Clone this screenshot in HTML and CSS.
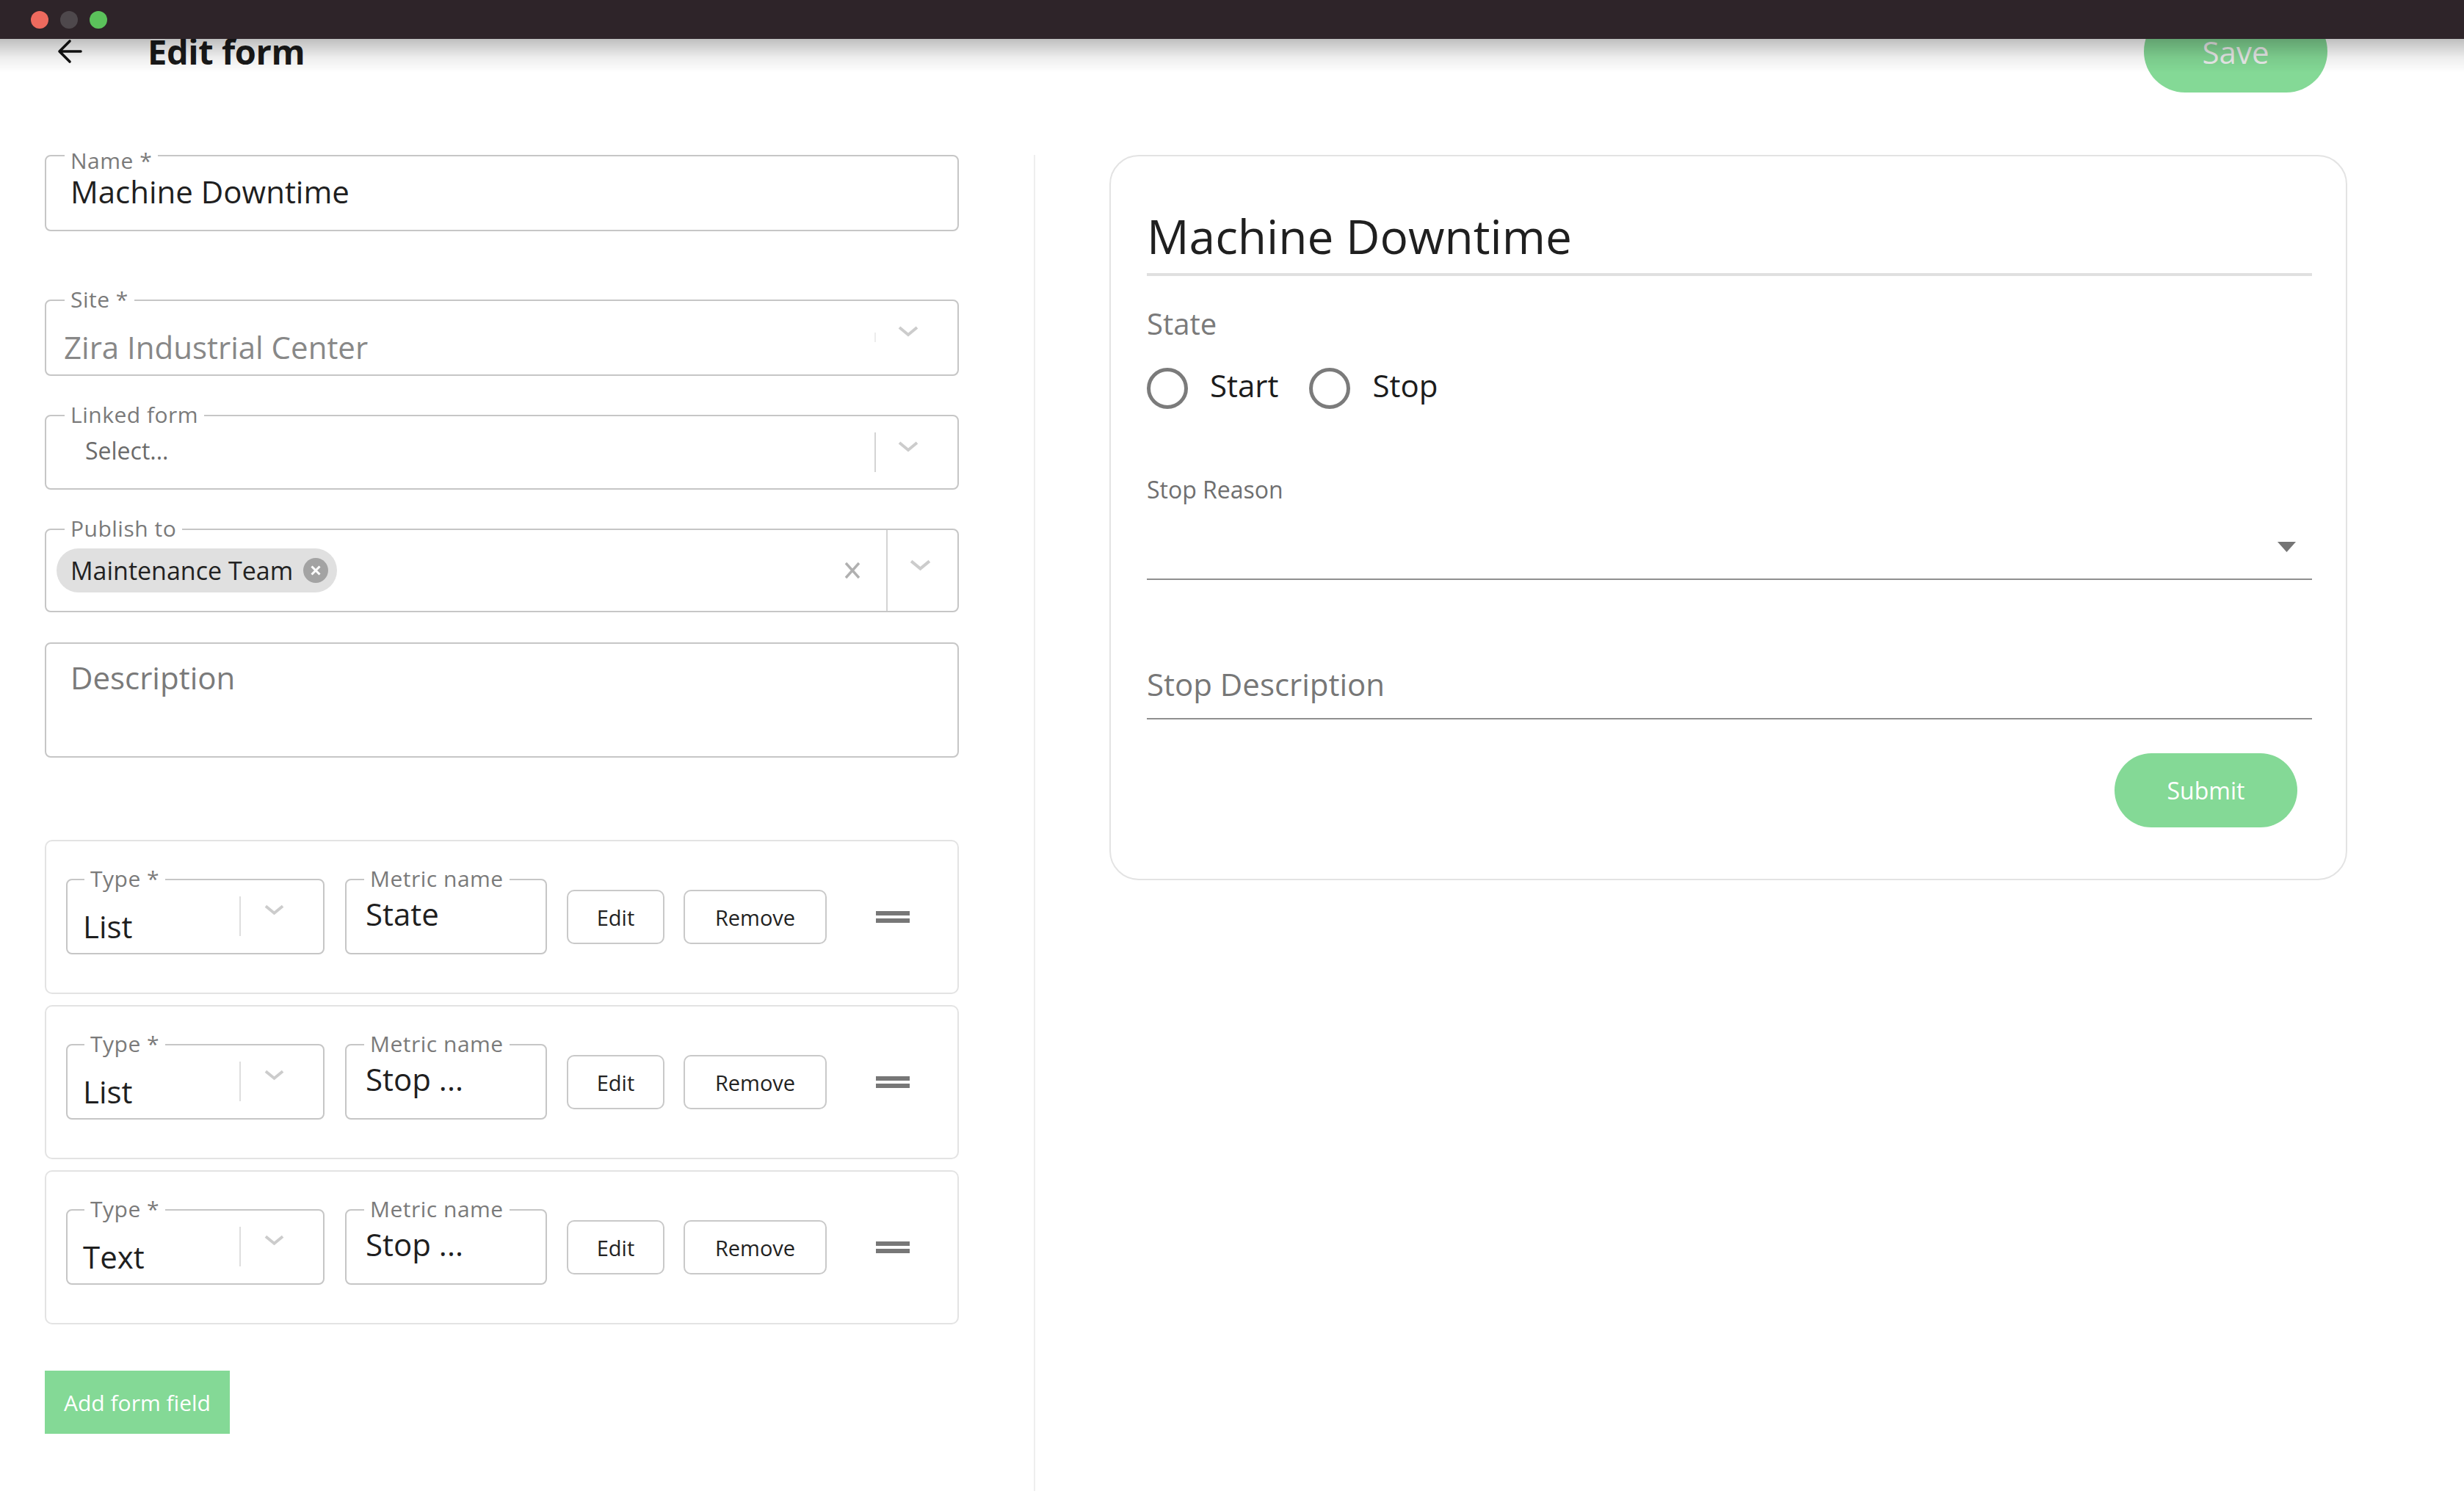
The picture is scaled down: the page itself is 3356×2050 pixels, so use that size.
FILE: index.html
```html
<!DOCTYPE html>
<html lang="en">
<head>
<meta charset="utf-8">
<title>Edit form</title>
<link rel="stylesheet" href="styles.css">
</head>
<body>
<div class="titlebar">
  <span class="light light-red"></span>
  <span class="light light-gray"></span>
  <span class="light light-green"></span>
</div>
<div class="titlebar-shadow"></div>

<div class="page">
  <header class="topbar">
    <button class="back" aria-label="Back">
      <svg viewBox="0 0 34 34" width="34" height="34"><path d="M32 17H4M17 3L3 17l14 14" fill="none" stroke="#141414" stroke-width="3.6" stroke-linecap="round" stroke-linejoin="round"/></svg>
    </button>
    <h1 class="title">Edit form</h1>
    <button class="save">Save</button>
  </header>

  <main class="main">
    <section class="editor">
      <div class="field field-name">
        <span class="flabel flabel-low">Name *</span>
        <div class="value">Machine Downtime</div>
      </div>

      <div class="field field-select field-site">
        <span class="flabel">Site *</span>
        <div class="value value-muted site-value">Zira Industrial Center</div>
        <span class="sep sep-short"></span>
        <svg class="chev" viewBox="0 0 30 16" width="30" height="16"><path d="M3 3l12 10 12-10" fill="none" stroke="#cccccc" stroke-width="4"/></svg>
      </div>

      <div class="field field-select field-linked">
        <span class="flabel">Linked form</span>
        <div class="placeholder">Select...</div>
        <span class="sep sep-mid"></span>
        <svg class="chev" viewBox="0 0 30 16" width="30" height="16"><path d="M3 3l12 10 12-10" fill="none" stroke="#cccccc" stroke-width="4"/></svg>
      </div>

      <div class="field field-publish">
        <span class="flabel">Publish to</span>
        <span class="chip">Maintenance Team
          <svg class="chip-x" viewBox="0 0 34 34" width="34" height="34"><circle cx="17" cy="17" r="17" fill="#a3a3a3"/><path d="M11.5 11.5l11 11M22.5 11.5l-11 11" stroke="#fff" stroke-width="3"/></svg>
        </span>
        <svg class="clear" viewBox="0 0 26 26" width="26" height="26"><path d="M4 3l18 20M22 3L4 23" stroke="#b0b0b0" stroke-width="3.4"/></svg>
        <span class="sep sep-full"></span>
        <svg class="chev chev-publish" viewBox="0 0 30 16" width="31" height="17"><path d="M3 3l12 10 12-10" fill="none" stroke="#cccccc" stroke-width="4"/></svg>
      </div>

      <div class="field field-desc">
        <div class="value value-muted">Description</div>
      </div>

      <div class="metric-list">
        <div class="metric-card">
          <div class="field field-type">
            <span class="flabel">Type *</span>
            <div class="value type-value">List</div>
            <span class="sep sep-type"></span>
            <svg class="chev chev-type" viewBox="0 0 30 16" width="29" height="16"><path d="M3 3l12 10 12-10" fill="none" stroke="#cccccc" stroke-width="4"/></svg>
          </div>
          <div class="field field-metric">
            <span class="flabel">Metric name</span>
            <div class="value">State</div>
          </div>
          <button class="btn btn-edit">Edit</button>
          <button class="btn btn-remove">Remove</button>
          <span class="handle"><span></span><span></span></span>
        </div>

        <div class="metric-card">
          <div class="field field-type">
            <span class="flabel">Type *</span>
            <div class="value type-value">List</div>
            <span class="sep sep-type"></span>
            <svg class="chev chev-type" viewBox="0 0 30 16" width="29" height="16"><path d="M3 3l12 10 12-10" fill="none" stroke="#cccccc" stroke-width="4"/></svg>
          </div>
          <div class="field field-metric">
            <span class="flabel">Metric name</span>
            <div class="value">Stop ...</div>
          </div>
          <button class="btn btn-edit">Edit</button>
          <button class="btn btn-remove">Remove</button>
          <span class="handle"><span></span><span></span></span>
        </div>

        <div class="metric-card">
          <div class="field field-type">
            <span class="flabel">Type *</span>
            <div class="value type-value">Text</div>
            <span class="sep sep-type"></span>
            <svg class="chev chev-type" viewBox="0 0 30 16" width="29" height="16"><path d="M3 3l12 10 12-10" fill="none" stroke="#cccccc" stroke-width="4"/></svg>
          </div>
          <div class="field field-metric">
            <span class="flabel">Metric name</span>
            <div class="value">Stop ...</div>
          </div>
          <button class="btn btn-edit">Edit</button>
          <button class="btn btn-remove">Remove</button>
          <span class="handle"><span></span><span></span></span>
        </div>
      </div>

      <button class="add-btn">Add form field</button>
    </section>

    <div class="divider"></div>

    <section class="preview">
      <h2 class="pv-title">Machine Downtime</h2>
      <div class="pv-label">State</div>
      <div class="radios">
        <span class="radio"></span><span class="radio-text">Start</span>
        <span class="radio radio-second"></span><span class="radio-text">Stop</span>
      </div>
      <div class="reason-label">Stop Reason</div>
      <div class="select-line">
        <svg class="drop" viewBox="0 0 29 14" width="29" height="14"><path d="M2 0h25L14.5 14z" fill="#757575"/></svg>
      </div>
      <div class="desc-input">Stop Description</div>
      <button class="submit">Submit</button>
    </section>
  </main>
</div>
</body>
</html>
```

FILE: styles.css
```css
* { box-sizing: border-box; }

html, body { margin: 0; padding: 0; background: #ffffff; }

body {
  font-family: "Open Sans", "Liberation Sans", sans-serif;
  color: #1f1f1f;
}

button { font-family: inherit; cursor: pointer; }

/* window chrome */
.titlebar {
  position: fixed;
  top: 0; left: 0; right: 0;
  height: 53px;
  background: #2e2429;
  display: flex;
  align-items: center;
  gap: 16px;
  padding-left: 42px;
  z-index: 10;
}
.light { width: 24px; height: 24px; border-radius: 50%; }
.light-red { background: #ed6a5e; }
.light-gray { background: #4e484c; }
.light-green { background: #5bc25b; }

.titlebar-shadow {
  position: fixed;
  top: 53px; left: 0; right: 0;
  height: 46px;
  background: linear-gradient(rgba(0,0,0,0.25), rgba(0,0,0,0.07) 55%, rgba(0,0,0,0));
  pointer-events: none;
  z-index: 9;
}

/* header */
.topbar {
  display: flex;
  align-items: center;
  height: 112px;
  margin-top: 14px;
  padding: 0 186px 0 78px;
}
.back {
  width: 34px; height: 34px;
  padding: 0; border: 0; background: none;
  display: flex;
}
.title {
  margin: 0 0 0 89px;
  font-size: 47px;
  font-weight: 700;
  line-height: 112px;
  color: #1a1a1a;
  letter-spacing: -0.4px;
}
.save {
  margin-left: auto;
  width: 250px;
  height: 112px;
  border: 0;
  border-radius: 56px;
  background: #84d996;
  color: #ececec;
  font-size: 42px;
}

/* layout */
.main {
  display: flex;
  margin-top: 85px;
  padding-left: 61px;
}
.editor {
  width: 1245px;
  padding-bottom: 78px;
  display: flex;
  flex-direction: column;
}
.divider {
  width: 2px;
  background: #eeeeee;
  margin-left: 102px;
}
.preview {
  width: 1686px;
  margin-left: 101px;
  align-self: flex-start;
  border: 2px solid #e3e3e3;
  border-radius: 40px;
  padding: 71px 46px 70px 49px;
  display: flex;
  flex-direction: column;
}

/* outlined fields */
.field {
  position: relative;
  border: 2px solid #c6c6c6;
  border-radius: 8px;
}
.flabel {
  position: absolute;
  top: -17px;
  left: 25px;
  padding: 0 8px;
  background: #fff;
  font-size: 30px;
  line-height: 30px;
  color: #7a7a7a;
  letter-spacing: 0.5px;
  white-space: nowrap;
}
.flabel-low { top: -9px; }

.value {
  font-size: 42px;
  line-height: 50px;
  color: #1f1f1f;
  white-space: nowrap;
}
.value-muted { color: #888888; }

.field-name {
  height: 104px;
  padding: 23px 0 0 33px;
}

.field-select {
  display: flex;
  align-items: flex-start;
}
.field-site {
  height: 104px;
  margin-top: 93px;
}
.site-value { margin-top: 38px; padding-left: 24px; }
.sep { width: 2px; background: #d4d4d4; }
.sep-short { margin-left: auto; margin-top: 43px; height: 13px; background: #ececec; }
.chev { flex: none; display: block; }
.field-site .chev, .field-linked .chev { margin: 33px 52px 0 29px; }

.field-linked {
  height: 102px;
  margin-top: 53px;
}
.placeholder {
  margin-top: 27px;
  padding-left: 53px;
  font-size: 32px;
  line-height: 40px;
  color: #6b6b6b;
}
.sep-mid { margin-left: auto; margin-top: 22px; height: 54px; }

.field-publish {
  height: 114px;
  margin-top: 53px;
  display: flex;
  align-items: center;
  padding-left: 14px;
}
.chip {
  display: flex;
  align-items: center;
  gap: 14px;
  height: 60px;
  border-radius: 30px;
  background: #e0e0e0;
  padding: 0 12px 0 19px;
  font-size: 34px;
  color: #222222;
  white-space: nowrap;
}
.chip-x { display: block; }
.clear { margin-left: auto; margin-right: 33px; display: block; }
.sep-full { align-self: stretch; }
.chev-publish { margin: 0 35px 16px 29px; }

.field-desc {
  height: 157px;
  margin-top: 41px;
  padding: 21px 0 0 33px;
}
.field-desc .value { color: #7a7a7a; }

/* metric cards */
.metric-list {
  margin-top: 112px;
  display: flex;
  flex-direction: column;
  gap: 15px;
}
.metric-card {
  height: 210px;
  border: 2px solid #e3e3e3;
  border-radius: 10px;
  display: flex;
  align-items: flex-start;
  padding: 51px 0 0 27px;
}
.field-type {
  width: 352px;
  height: 103px;
  display: flex;
  align-items: flex-start;
}
.field-type .flabel { left: 23px; }
.type-value { margin-top: 38px; padding-left: 21px; }
.sep-type { margin-left: auto; margin-top: 22px; height: 54px; background: #dedede; }
.chev-type { margin: 32px 52px 0 31px; }

.field-metric {
  width: 275px;
  height: 103px;
  margin-left: 28px;
  padding: 21px 0 0 26px;
}
.field-metric .flabel { left: 24px; }

.btn {
  height: 74px;
  margin-top: 15px;
  border: 2px solid #c9c9c9;
  border-radius: 10px;
  background: #ffffff;
  color: #222222;
  font-size: 29px;
  padding: 0;
}
.btn-edit { width: 133px; margin-left: 27px; }
.btn-remove { width: 195px; margin-left: 26px; }

.handle {
  margin-left: 67px;
  margin-top: 44px;
  display: flex;
  flex-direction: column;
  gap: 4px;
}
.handle span {
  display: block;
  width: 46px;
  height: 6px;
  background: #777777;
}

.add-btn {
  align-self: flex-start;
  margin-top: 63px;
  width: 252px;
  height: 86px;
  border: 0;
  background: #84d996;
  color: #ffffff;
  font-size: 30px;
  padding: 0;
}

/* preview */
.pv-title {
  margin: 0;
  font-size: 64px;
  font-weight: 400;
  line-height: 76px;
  color: #1f1f1f;
  padding-bottom: 12px;
  border-bottom: 4px solid #e0e0e0;
}
.pv-label {
  margin-top: 41px;
  font-size: 40px;
  line-height: 48px;
  color: #7a7a7a;
}
.radios {
  display: flex;
  align-items: center;
  height: 57px;
  margin-top: 35px;
}
.radio {
  width: 56px;
  height: 56px;
  border: 5px solid #7b7b7b;
  border-radius: 50%;
  flex: none;
}
.radio-second { margin-left: 42px; }
.radio-text {
  margin-left: 30px;
  margin-bottom: 8px;
  font-size: 42px;
  line-height: 50px;
  color: #1c1c1c;
}
.reason-label {
  margin-top: 91px;
  font-size: 32px;
  line-height: 38px;
  color: #6f6f6f;
}
.select-line {
  height: 104px;
  border-bottom: 2px solid #8f8f8f;
  display: flex;
  justify-content: flex-end;
  align-items: flex-start;
  padding: 52px 20px 0 0;
}
.drop { display: block; }
.desc-input {
  margin-top: 117px;
  font-size: 42px;
  line-height: 50px;
  color: #777777;
  padding-bottom: 21px;
  border-bottom: 2px solid #8f8f8f;
}
.submit {
  align-self: flex-end;
  margin: 46px 20px 0 0;
  width: 249px;
  height: 101px;
  border: 0;
  border-radius: 51px;
  background: #84d996;
  color: #ffffff;
  font-size: 32px;
  padding: 0;
}
```
